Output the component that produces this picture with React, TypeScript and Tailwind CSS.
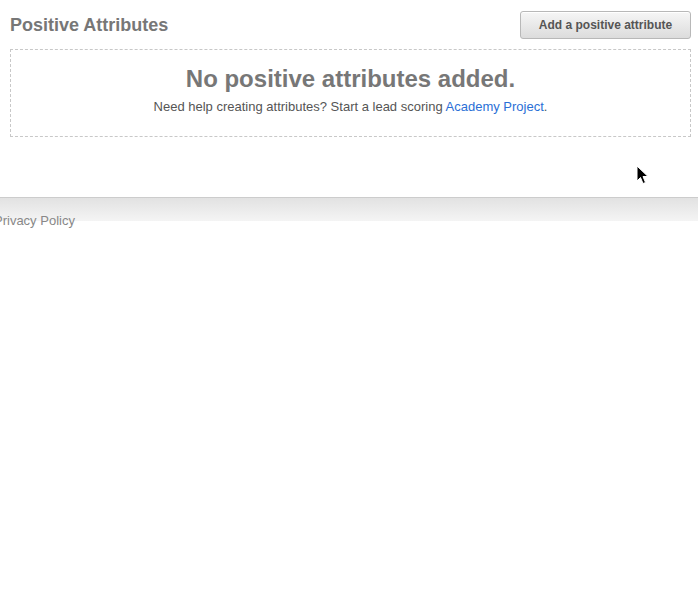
import React from "react";

export default function App() {
  return (
    <div className="relative min-h-[608px] bg-white font-['Liberation_Sans',Arial,Helvetica,sans-serif]">
      <div className="pl-[10px] pr-[7px] pt-[11px]">
        <div className="flex h-[28px] items-center justify-between">
          <h2 className="text-[18px] font-bold leading-none text-[#777]">Positive Attributes</h2>
          <button className="h-[28px] w-[171px] rounded-[3px] border border-[#b8b8b8] bg-[linear-gradient(#f6f6f6,#dcdcdc)] text-[12px] font-bold text-[#555] shadow-[inset_0_1px_0_#fff]">
            Add a positive attribute
          </button>
        </div>
        <div className="mt-[10px] flex h-[88px] flex-col items-center border border-dashed border-[#c8c8c8] pt-[15px]">
          <h1 className="text-[24px] font-bold leading-[28px] text-[#777]">No positive attributes added.</h1>
          <p className="mt-[6px] text-[13px] leading-[16px] text-[#555]">
            Need help creating attributes? Start a lead scoring{" "}
            <a className="text-[#2a6fd6]">Academy Project</a>.
          </p>
        </div>
      </div>
      <footer className="mt-[60px] border-t border-[#cccccc] bg-[linear-gradient(#e2e2e2,#f4f4f4_23px,#ffffff_23px)] pt-[10px]">
        <span className="ml-[-6px] text-[13px] leading-[16px] text-[#888]">Privacy Policy</span>
      </footer>
      <svg className="absolute left-[636px] top-[165px]" width="13" height="20" viewBox="0 0 13 20">
        <path d="M1 1 L1 16 L4.5 12.5 L7 18.5 L9.5 17.5 L7 11.5 L12 11.5 Z" fill="#000" stroke="#fff" strokeWidth="1" />
      </svg>
    </div>
  );
}
